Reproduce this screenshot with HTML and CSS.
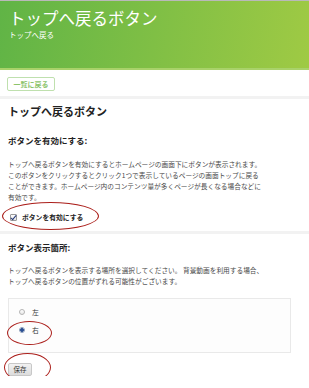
FILE: index.html
```html
<!DOCTYPE html>
<html lang="ja">
  <head>
    <meta charset="UTF-8" />
    <meta name="viewport" content="width=device-width, initial-scale=1.0" />
    <title>トップへ戻るボタン</title>
    <link rel="stylesheet" href="styles.css">
  </head>
  <body>
    <header class="page-header">
      <h1>トップへ戻るボタン</h1>
      <p class="crumb">トップへ戻る</p>
    </header>

    <div class="toolbar">
      <a href="#" class="back-button">一覧に戻る</a>
    </div>

    <section class="section">
      <h2>トップへ戻るボタン</h2>
      <h3>ボタンを有効にする:</h3>
      <p class="desc">トップへ戻るボタンを有効にするとホームページの画面下にボタンが表示されます。<br />このボタンをクリックするとクリック1つで表示しているページの画面トップに戻る<br />ことができます。ホームページ内のコンテンツ量が多くページが長くなる場合などに<br />有効です。</p>
      <label class="check-row">
        <input type="checkbox" checked />
        <span>ボタンを有効にする</span>
        <span class="mark mark-check"></span>
      </label>
    </section>

    <section class="section">
      <h3 class="first">ボタン表示箇所:</h3>
      <p class="desc short">トップへ戻るボタンを表示する場所を選択してください。 背景動画を利用する場合、<br />トップへ戻るボタンの位置がずれる可能性がございます。</p>
      <div class="radio-box">
        <label class="radio-row">
          <input type="radio" name="pos" />
          <span>左</span>
        </label>
        <label class="radio-row">
          <input type="radio" name="pos" checked />
          <span>右</span>
          <span class="mark mark-radio"></span>
        </label>
      </div>
      <div class="save-row">
        <button class="save-button">保存</button>
        <span class="mark mark-save"></span>
      </div>
    </section>
  </body>
</html>
```

FILE: styles.css
```css
:root {
  --green-left: #60b446;
  --green-right: #9fca44;
  --text-dark: #222;
  --text-body: #4a4a4a;
  --line: #f2f2f2;
  --mark: #ab1f1b;
}

body {
  margin: 0;
  font-family: "Noto Sans CJK JP", "Noto Sans", sans-serif;
  color: var(--text-dark);
  background: #fff;
}

.page-header {
  height: 70px;
  padding: 7px 9px 0;
  box-sizing: border-box;
  border-top: 1px solid #b9b9b9;
  border-bottom: 2px solid #a9d26a;
  background: linear-gradient(100deg, var(--green-left), var(--green-right));
  color: #fff;
}

.page-header h1 {
  margin: 0;
  font-size: 16.5px;
  line-height: 20px;
  font-weight: 400;
}

.crumb {
  margin: 2px 0 0;
  font-size: 7.5px;
  line-height: 10px;
}

.toolbar {
  display: flex;
  padding: 7px 7px 5px;
  border-bottom: 3px solid var(--line);
}

.back-button {
  width: 48px;
  height: 14px;
  box-sizing: border-box;
  border: 1px solid #bfe0ae;
  border-radius: 2px;
  color: #8cc46c;
  font-size: 7px;
  line-height: 12px;
  text-align: center;
  text-decoration: none;
  font-weight: 700;
}

.section {
  padding: 0 8px;
}

.section + .section {
  border-top: 3px solid var(--line);
}

h2 {
  margin: 5px 0 0;
  font-size: 11px;
  line-height: 14px;
}

h3 {
  margin: 16px 0 0;
  font-size: 8.5px;
  line-height: 12px;
}

h3.first {
  margin-top: 7px;
}

.desc {
  margin: 13px 0 0;
  font-size: 6.7px;
  line-height: 11px;
  color: var(--text-body);
  white-space: nowrap;
}

.desc.short {
  margin-top: 12px;
}

.check-row {
  position: relative;
  display: flex;
  align-items: center;
  gap: 5px;
  margin: 8px 0 8px 2px;
  height: 12px;
  font-size: 6.8px;
  font-weight: 700;
}

.check-row input {
  appearance: none;
  position: relative;
  margin: 0;
  width: 7px;
  height: 7px;
  border: 1px solid #9a9a9a;
  border-radius: 1px;
  background: linear-gradient(#fff, #e4e4e4);
}

.check-row input:checked::after {
  content: "";
  position: absolute;
  left: 1px;
  top: -1px;
  width: 2px;
  height: 5px;
  border: solid #243a78;
  border-width: 0 1.5px 1.5px 0;
  transform: rotate(40deg);
}

.radio-box {
  margin-top: 11px;
  width: 283px;
  height: 55px;
  box-sizing: border-box;
  padding: 7px 10px 0;
  border: 1px solid #e9e9e9;
  background: #fdfdfd;
}

.radio-row {
  position: relative;
  display: flex;
  align-items: center;
  gap: 7px;
  height: 12px;
  margin-bottom: 5.5px;
  font-size: 6.8px;
  color: #333;
}

.radio-row input {
  appearance: none;
  margin: 0;
  width: 6px;
  height: 6px;
  border: 1px solid #b4b4b4;
  border-radius: 50%;
  background: linear-gradient(#fff, #e8e8e8);
}

.radio-row input:checked {
  border-color: #8a9bb8;
  background: radial-gradient(circle, #2a4f94 0 1.6px, #dfe6f2 2px);
}

.save-row {
  position: relative;
  display: flex;
  margin-top: 10px;
}

.save-button {
  width: 24px;
  height: 13px;
  padding: 0;
  border: 1px solid #c8c8c8;
  border-radius: 2px;
  background: linear-gradient(#f2f2f2, #dcdcdc);
  font-family: inherit;
  font-size: 6.5px;
  line-height: 11px;
  color: #333;
}

/* red hand-drawn style annotations */
.mark {
  position: absolute;
  border: 1.6px solid var(--mark);
  border-radius: 50%;
  pointer-events: none;
}

.mark-check {
  left: -8px;
  top: -9px;
  width: 95px;
  height: 26px;
}

.mark-radio {
  left: -12px;
  top: -3px;
  width: 43px;
  height: 22px;
}

.mark-save {
  left: -4px;
  top: -10px;
  width: 45px;
  height: 27px;
}
```
